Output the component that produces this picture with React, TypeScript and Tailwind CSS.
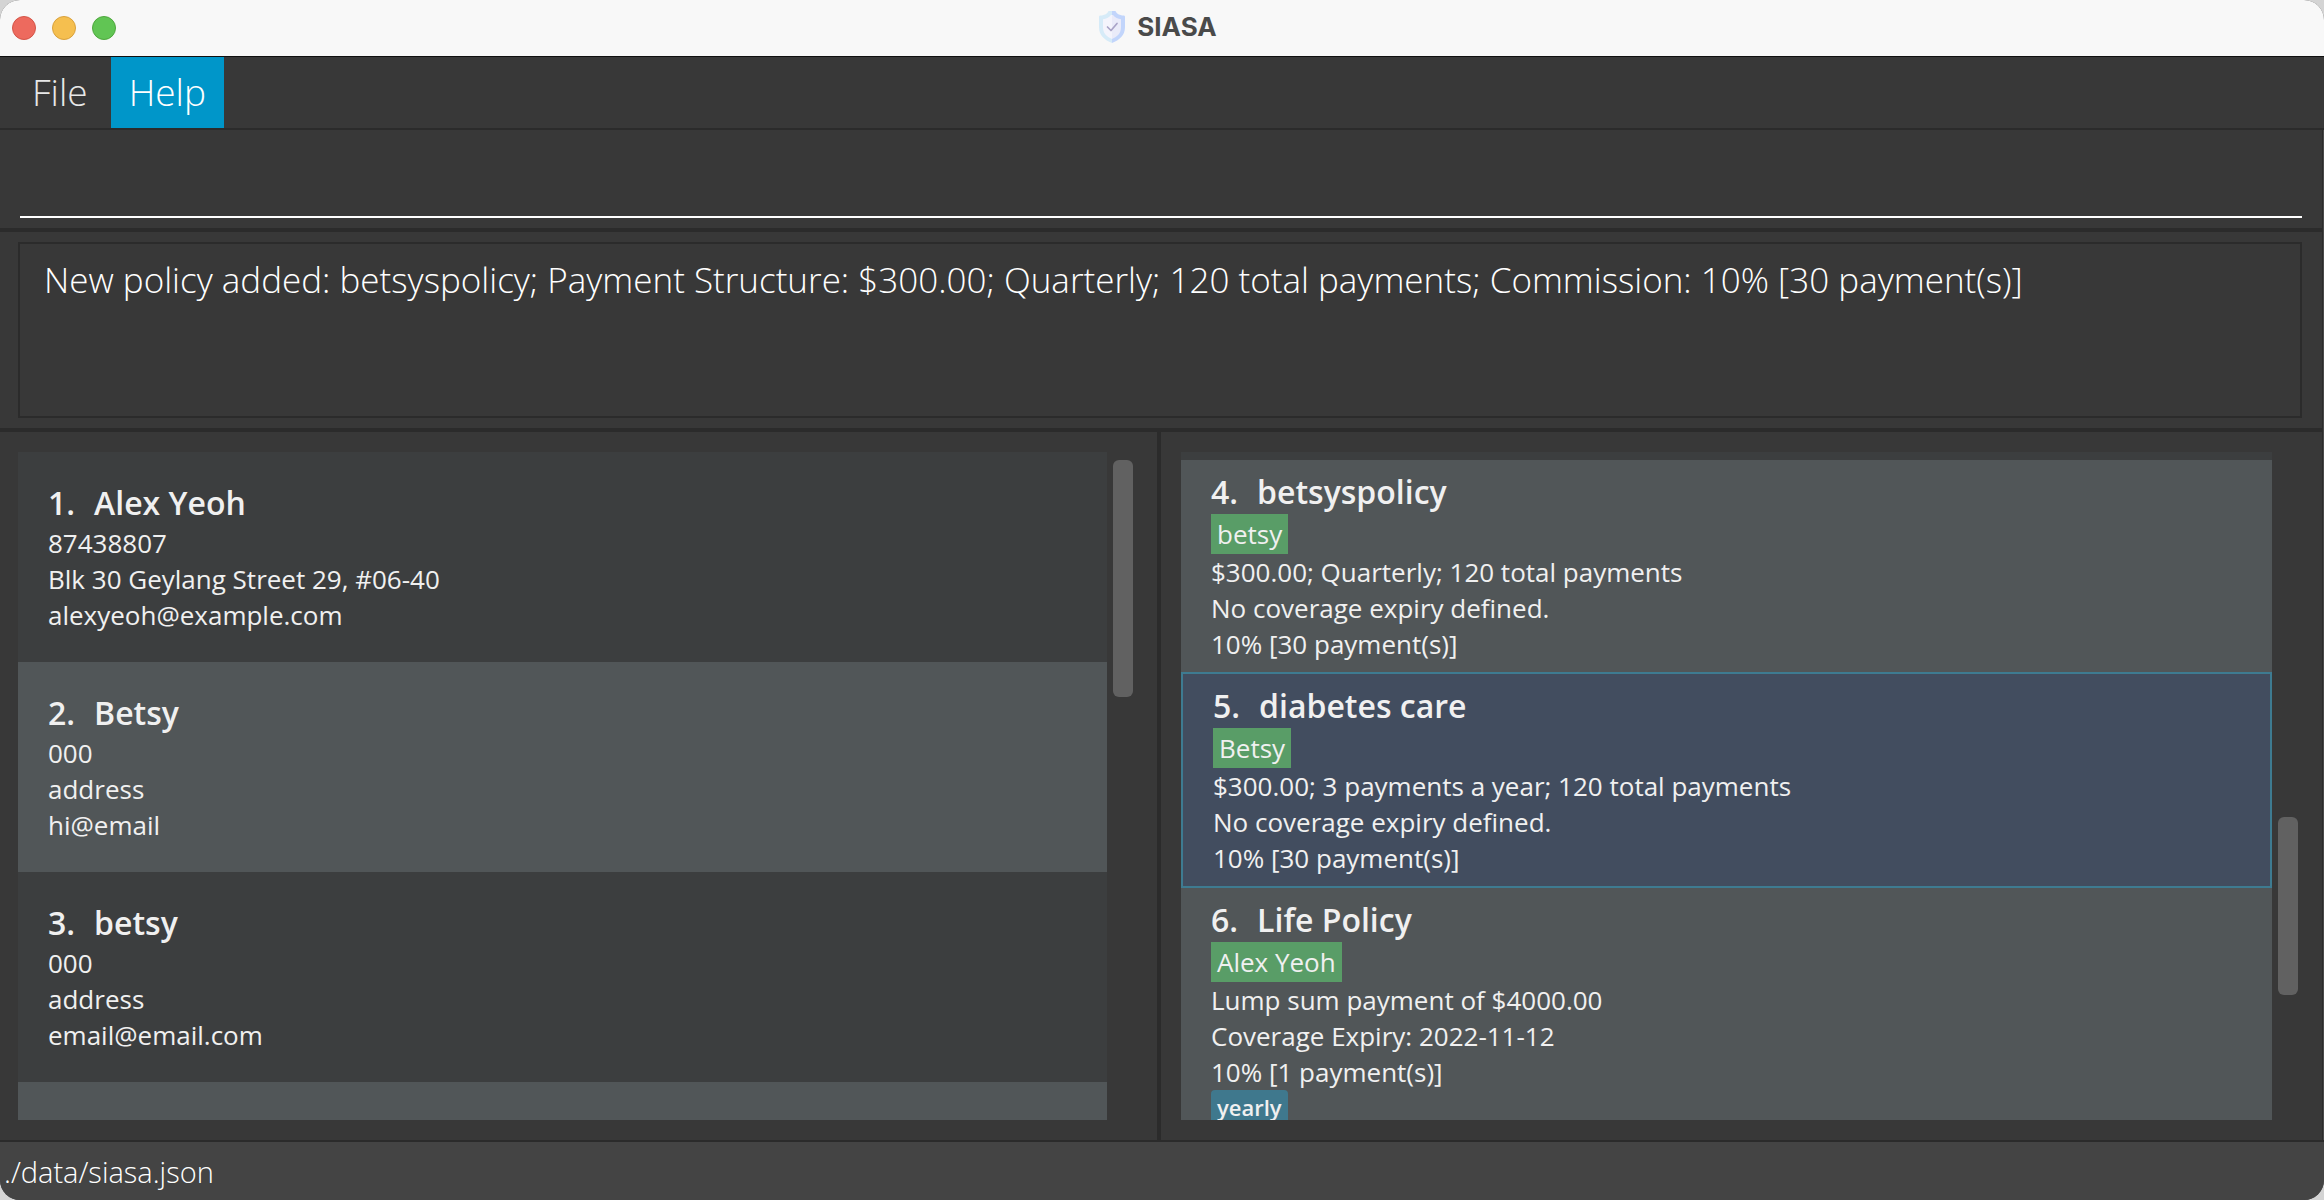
import React from "react";

type Client = { name: string; phone: string; address: string; email: string };
type Policy = {
  index: number;
  name: string;
  client: string;
  payment: string;
  expiry: string;
  commission: string;
  tags?: string[];
};

const clients: Client[] = [
  { name: "Alex Yeoh", phone: "87438807", address: "Blk 30 Geylang Street 29, #06-40", email: "alexyeoh@example.com" },
  { name: "Betsy", phone: "000", address: "address", email: "hi@email" },
  { name: "betsy", phone: "000", address: "address", email: "email@email.com" },
];

const policies: Policy[] = [
  {
    index: 4,
    name: "betsyspolicy",
    client: "betsy",
    payment: "$300.00; Quarterly; 120 total payments",
    expiry: "No coverage expiry defined.",
    commission: "10% [30 payment(s)]",
  },
  {
    index: 5,
    name: "diabetes care",
    client: "Betsy",
    payment: "$300.00; 3 payments a year; 120 total payments",
    expiry: "No coverage expiry defined.",
    commission: "10% [30 payment(s)]",
  },
  {
    index: 6,
    name: "Life Policy",
    client: "Alex Yeoh",
    payment: "Lump sum payment of $4000.00",
    expiry: "Coverage Expiry: 2022-11-12",
    commission: "10% [1 payment(s)]",
    tags: ["yearly"],
  },
];

function ShieldIcon() {
  return (
    <svg width="26" height="32" viewBox="0 0 26 32" aria-hidden="true">
      <path d="M13 0H9.500C8.500 3 4.500 4.500 1.500 4.500C0.500 4.500 0 5 0 6V16c0 8.500 5.500 13 13 16z" fill="#d6ebf8" />
      <path d="M13 0h3.500c1 3 5 4.500 8 4.500c1 0 1.500 0.500 1.500 1.500V16c0 8.500-5.500 13-13 16z" fill="#c2d5fb" />
      <path d="M13 4h-1C10 6.500 7 8 4 8.300V16c0 6.500 3.500 9.500 9 12z" fill="#f4f4fc" />
      <path d="M13 4h1c2 2.500 5 4 8 4.300V16c0 6.500-3.500 9.500-9 12z" fill="#eaebf9" />
      <path d="M8.500 16l3.500 3.500 6-7" fill="none" stroke="#a9a3c7" strokeWidth="1.700" strokeLinecap="round" strokeLinejoin="round" />
    </svg>
  );
}

function Heading({ index, name }: { index: number; name: string }) {
  return (
    <h2 className="flex gap-[19px] text-[32px] leading-[44px] font-semibold">
      <span>{index}.</span>
      <span>{name}</span>
    </h2>
  );
}

function PolicyRow({ policy, selected }: { policy: Policy; selected: boolean }) {
  return (
    <li
      aria-current={selected}
      className={
        selected
          ? "shrink-0 border-2 border-[#3e7b91] bg-[#424d5f] px-[30px] py-2.5"
          : "shrink-0 bg-[#515658] px-[30px] py-2.5"
      }
    >
      <Heading index={policy.index} name={policy.name} />
      <div className="flex">
        <span className="bg-[#599d67] px-1.5 py-0.5">{policy.client}</span>
      </div>
      <p>{policy.payment}</p>
      <p>{policy.expiry}</p>
      <p>{policy.commission}</p>
      {policy.tags && (
        <div className="flex gap-2">
          {policy.tags.map((tag) => (
            <span key={tag} className="rounded bg-[#3f788d] px-1.5 py-0.5 text-[22px] leading-[30px] font-semibold">
              {tag}
            </span>
          ))}
        </div>
      )}
    </li>
  );
}

export default function App() {
  return (
    <div className="h-screen bg-[#d4d4d4] font-['Open_Sans','Noto_Sans',sans-serif]">
      <div className="flex h-full flex-col overflow-hidden rounded-[20px] bg-[#4a4a4a] text-[#f0f0f0]">
        <header className="grid h-[57px] shrink-0 grid-cols-[1fr_auto_1fr] items-center border-b border-[#101010] bg-[#f8f8f8] pr-5 pl-3">
          <div className="flex gap-4">
            <button aria-label="Close" className="size-6 rounded-full border border-[#d35548] bg-[#ed6a5e]" />
            <button aria-label="Minimize" className="size-6 rounded-full border border-[#d8a13d] bg-[#f5bf4f]" />
            <button aria-label="Zoom" className="size-6 rounded-full border border-[#4fa73e] bg-[#61c554]" />
          </div>
          <div className="flex items-center gap-3 pb-0.5">
            <ShieldIcon />
            <h1 className="font-[Inter,sans-serif] text-[26px] leading-8 font-bold text-[#4a4a4a]">SIASA</h1>
          </div>
        </header>

        <nav className="flex h-[73px] shrink-0 gap-[5px] border-b-2 border-[#2b2b2b] bg-[#383838] pl-3.5 text-[37px] leading-[52px] font-light">
          <button className="px-[18px] pb-0.5 text-[#e8e8e8]">File</button>
          <button className="bg-[#0096c9] px-[18px] pb-0.5 text-white">Help</button>
        </nav>

        <main className="mr-px flex min-h-0 flex-1 flex-col border-r border-[#2b2b2b] bg-[#383838]">
          <div className="flex h-[102px] shrink-0 flex-col border-b-4 border-[#2b2b2b] px-5 py-2.5">
            <input
              type="text"
              aria-label="Command"
              className="w-full flex-1 border-b-2 border-white bg-transparent text-[35px] font-light text-white outline-none"
            />
          </div>

          <div className="flex h-[200px] shrink-0 border-b-4 border-[#2b2b2b] py-2.5 pr-5 pl-[18px]">
            <textarea
              readOnly
              aria-label="Result"
              className="w-full flex-1 resize-none border-2 border-[#2b2b2b] bg-transparent px-6 py-3 text-[35px] leading-[48px] font-light text-white outline-none"
              value="New policy added: betsyspolicy; Payment Structure: $300.00; Quarterly; 120 total payments; Commission: 10% [30 payment(s)]"
            />
          </div>

          <div className="grid min-h-0 flex-1 grid-cols-2 text-[26px] leading-9">
            <section aria-label="Clients" className="flex min-h-0 gap-1.5 border-r-4 border-[#2b2b2b] py-5 pr-6 pl-[18px]">
              <ul className="flex min-w-0 flex-1 flex-col overflow-hidden">
                {clients.map((client, i) => (
                  <li key={i} className="shrink-0 bg-[#3c3e3f] px-[30px] py-[29px] even:bg-[#515658]">
                    <Heading index={i + 1} name={client.name} />
                    <p>{client.phone}</p>
                    <p>{client.address}</p>
                    <p>{client.email}</p>
                  </li>
                ))}
                <li className="flex-1 bg-[#515658]" />
              </ul>
              <div className="pt-2">
                <div className="h-[237px] w-5 rounded-md bg-[#616161]" />
              </div>
            </section>

            <section aria-label="Policies" className="flex min-h-0 gap-1.5 py-5 pr-6 pl-5">
              <ul className="flex min-w-0 flex-1 flex-col overflow-hidden">
                <li className="h-2 shrink-0 bg-[#3c3e3f]" />
                {policies.map((policy) => (
                  <PolicyRow key={policy.index} policy={policy} selected={policy.index === 5} />
                ))}
              </ul>
              <div className="pt-[365px]">
                <div className="h-[178px] w-5 rounded-md bg-[#616161]" />
              </div>
            </section>
          </div>
        </main>

        <footer className="h-15 shrink-0 border-t-2 border-[#2b2b2b] bg-[#444444] px-1 pt-2.5 text-[29px] leading-10 font-light text-white">
          ./data/siasa.json
        </footer>
      </div>
    </div>
  );
}
